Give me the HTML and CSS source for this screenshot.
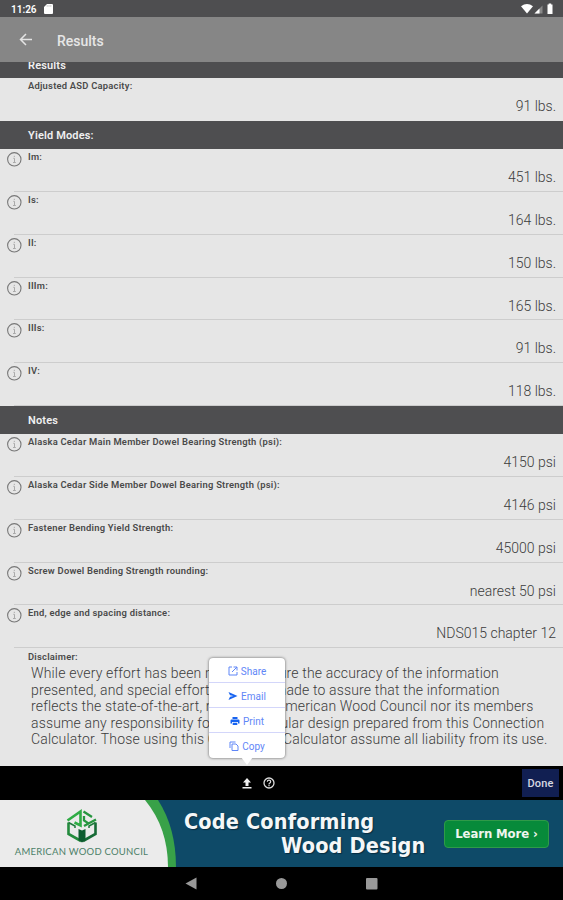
FILE: index.html
```html
<!DOCTYPE html>
<html lang="en">

<head>
    <meta charset="UTF-8">
    <meta name="viewport" content="width=device-width, initial-scale=1.0">
    <title>Results</title>
    <link rel="stylesheet" href="styles.css">
</head>

<body>

    <!-- shared icons -->
    <svg class="defs" width="0" height="0">
        <symbol id="info" viewBox="0 0 16 16">
            <circle cx="8.300" cy="8.300" r="6.700" fill="none" stroke="#777" stroke-width="1.100" />
            <path d="M7.300 7.300h1.200v4M7 11.500h2.800M8.300 4.800v1.200" fill="none" stroke="#aaa" stroke-width="1" />
        </symbol>
    </svg>

    <div class="status">
        <span class="clock">11:26</span>
        <svg class="sd" width="9" height="10" viewBox="0 0 9 10">
            <path d="M3 0h5q1 0 1 1v8q0 1-1 1H1q-1 0-1-1V3z" fill="#fff" />
            <path d="M3.2 1.2v1.5M5 1.2v1.5M6.8 1.2v1.5" stroke="#aaa" stroke-width=".7" />
        </svg>
        <svg class="signals" width="34" height="12" viewBox="0 0 34 12">
            <path d="M2 3.300Q8 -1.300 14 3.300L8 10.500z" fill="#fff" />
            <path d="M15.500 10.500L23.500 2.500V10.500z" fill="#888" />
            <path d="M15.500 10.500L20.500 5.500V10.500z" fill="#fff" />
            <path d="M28.500 1.500H29.700V.5h2.500v1H33.500v9.500h-5z" fill="#fff" />
        </svg>
    </div>

    <div class="header">
        <svg width="14" height="14" viewBox="0 0 14 14">
            <path d="M13 6.500H2M7 1L1.500 6.500L7 12" fill="none" stroke="#e4e4e4" stroke-width="1.500" />
        </svg>
        <h1>Results</h1>
    </div>

    <div class="content">
        <h2 class="cut"><span>Results</span></h2>
        <div class="row first">
            <label>Adjusted ASD Capacity:</label>
            <p>91 lbs.</p>
        </div>

        <h2>Yield Modes:</h2>
        <div class="row"><svg><use href="#info" /></svg><label>Im:</label><p>451 lbs.</p></div>
        <div class="row"><svg><use href="#info" /></svg><label>Is:</label><p>164 lbs.</p></div>
        <div class="row"><svg><use href="#info" /></svg><label>II:</label><p>150 lbs.</p></div>
        <div class="row"><svg><use href="#info" /></svg><label>IIIm:</label><p>165 lbs.</p></div>
        <div class="row"><svg><use href="#info" /></svg><label>IIIs:</label><p>91 lbs.</p></div>
        <div class="row"><svg><use href="#info" /></svg><label>IV:</label><p>118 lbs.</p></div>

        <h2>Notes</h2>
        <div class="row"><svg><use href="#info" /></svg><label>Alaska Cedar Main Member Dowel Bearing Strength (psi):</label><p>4150 psi</p></div>
        <div class="row"><svg><use href="#info" /></svg><label>Alaska Cedar Side Member Dowel Bearing Strength (psi):</label><p>4146 psi</p></div>
        <div class="row"><svg><use href="#info" /></svg><label>Fastener Bending Yield Strength:</label><p>45000 psi</p></div>
        <div class="row"><svg><use href="#info" /></svg><label>Screw Dowel Bending Strength rounding:</label><p>nearest 50 psi</p></div>
        <div class="row"><svg><use href="#info" /></svg><label>End, edge and spacing distance:</label><p>NDS015 chapter 12</p></div>

        <div class="disclaimer">
            <label>Disclaimer:</label>
            <p>
                While every effort has been made to insure the accuracy of the information<br>
                presented, and special effort has been made to assure that the information<br>
                reflects the state-of-the-art, neither the American Wood Council nor its members<br>
                assume any responsibility for any particular design prepared from this Connection<br>
                Calculator. Those using this Connection Calculator assume all liability from its use.
            </p>
        </div>
    </div>

    <div class="toolbar">
        <svg class="upload" width="10" height="11" viewBox="0 0 10 11">
            <path d="M5 0L9 4.500H6.500V8h-3V4.500H1zM.5 9h9v1.500h-9z" fill="#eee" />
        </svg>
        <svg class="help" width="12" height="12" viewBox="0 0 12 12">
            <circle cx="6" cy="6" r="5" fill="none" stroke="#ddd" stroke-width="1.300" />
            <path d="M4.300 4.800Q4.300 3.200 6 3.200T7.700 4.700Q7.700 5.600 6.700 6.100Q6 6.500 6 7.400M6 8.100v1.200" fill="none" stroke="#ddd" stroke-width="1.200" />
        </svg>
        <button class="done">Done</button>

        <div class="menu">
            <a>
                <svg width="10" height="10" viewBox="0 0 10 10"><path d="M4 1H1v8h8V6M5.500 1H9v3.500M9 1L4 6" fill="none" stroke="#5f86f7" stroke-width="1" /></svg>
                Share
            </a>
            <a>
                <svg width="10" height="10" viewBox="0 0 10 10"><path d="M.5 1L9.500 5L.5 9L2 5.700L5.500 5L2 4.300z" fill="#1763f0" /></svg>
                Email
            </a>
            <a>
                <svg width="10" height="10" viewBox="0 0 10 10"><path d="M2.500 1h5v2h-5zM1.500 3.500h7q1 0 1 1V7.500H8V6H2v1.500H.5v-3q0-1 1-1zM2.700 6.700h4.600V9H2.700z" fill="#1763f0" /></svg>
                Print
            </a>
            <a>
                <svg width="10" height="10" viewBox="0 0 10 10"><path d="M1 7V1h5.500M3 3h4l2 2v4.500H3z" fill="none" stroke="#5f86f7" stroke-width="1" /></svg>
                Copy
            </a>
        </div>
    </div>

    <div class="banner">
        <svg class="curve" width="180" height="67" viewBox="0 0 180 67">
            <path d="M0 0H158Q176 28 176 67H0z" fill="#38a148" />
            <path d="M0 0H145Q168 28 168 67H0z" fill="#ebebeb" />
        </svg>
        <div class="logo">
            <!-- hexagonal mark: open box below, arrow roof above -->
            <svg width="32" height="34" viewBox="0 0 32 34">
                <g fill="none" stroke-width="2.600">
                    <path d="M2.500 13.500V25L15 32" stroke="#238b3d" />
                    <path d="M29.500 13.500V25L17 32" stroke="#176b36" />
                    <path d="M2.500 13.500L9 17V19M29.500 13.500L23 17V19" stroke="#1d7a3b" stroke-width="1.500" />
                    <path d="M1.500 11.500L14.500 2.500V16.500L8.500 13.500" stroke="#2fac45" />
                    <path d="M17.500 2.500L26 8M18 7V11.500L22.500 14.500L30 10.500M18 17L22.500 14.500" stroke="#26963f" stroke-width="2.300" />
                </g>
                <path d="M12.500 20L16 21.500L19.500 20V31L16 33.500L12.500 31z" fill="#0e5c30" />
            </svg>
            <span>AMERICAN WOOD COUNCIL</span>
        </div>
        <div class="slogan">
            <div>Code Conforming</div>
            <div class="second">Wood Design</div>
        </div>
        <a class="learn">Learn More ›</a>
    </div>

    <div class="nav">
        <svg width="563" height="33" viewBox="0 0 563 33">
            <path d="M185.500 16.500L196.500 10.500V22.500z" fill="#999" />
            <circle cx="281.500" cy="16.500" r="5.500" fill="#999" />
            <rect x="366" y="11" width="11.500" height="11.500" rx="1" fill="#999" />
        </svg>
    </div>

</body>

</html>
```
FILE: styles.css
```css
body {
    margin: 0;
    width: 563px;
    height: 900px;
    overflow: hidden;
    display: flex;
    flex-direction: column;
    font-family: Roboto, "Liberation Sans", sans-serif;
    background-color: #000;
    color: #3c3c3c;
}

.defs {
    display: none;
}

h1, h2, p {
    margin: 0;
}

.status {
    height: 17px;
    box-sizing: border-box;
    padding: 1px 10px 0 11px;
    display: flex;
    align-items: center;
    background-color: #4e4e50;
}

.clock {
    width: 33px;
    font-size: 10px;
    font-weight: 600;
    color: #fff;
}

.signals {
    margin-left: auto;
}

.header {
    height: 45px;
    display: flex;
    align-items: center;
    padding-left: 19px;
    background-color: #868686;
}

.header h1 {
    margin: 2px 0 0 24px;
    font-size: 14px;
    font-weight: 500;
    color: #e6e6e6;
}

.content {
    height: 704px;
    overflow: hidden;
    background-color: #e6e6e6;
}

h2 {
    height: 28px;
    line-height: 29px;
    box-sizing: border-box;
    padding-left: 28px;
    font-size: 11px;
    font-weight: 600;
    letter-spacing: .15px;
    color: #f0f0f0;
    background-color: #4e4e50;
}

/* scrolled half way under the header */
.cut {
    height: 16px;
    overflow: hidden;
}

.cut span {
    display: block;
    margin-top: -11px;
}

.row {
    display: grid;
    grid-template-columns: 28px 1fr;
    height: 42.85px;
    box-sizing: border-box;
    padding-right: 7px;
    background: linear-gradient(#cdcdcd, #cdcdcd) 14px 100% / 100% 1px no-repeat;
}

.row.first {
    height: 43px;
    background: none;
}

.row svg {
    width: 16px;
    height: 16px;
    margin: 2px 0 0 6px;
}

.row label {
    grid-column: 2;
    grid-row: 1;
    line-height: 15px;
}

label {
    font-size: 9.4px;
    font-weight: 600;
    letter-spacing: .23px;
    color: #4a4a4a;
}

.row p {
    grid-column: 2;
    grid-row: 1;
    margin-top: 19px;
    line-height: 19px;
    text-align: right;
    font-size: 14px;
    font-weight: 300;
}

.disclaimer {
    padding-left: 28px;
}

.disclaimer label {
    display: block;
    line-height: 17px;
}

.disclaimer p {
    padding-left: 3px;
    white-space: nowrap;
    font-size: 14px;
    font-weight: 300;
    letter-spacing: .16px;
    line-height: 16.5px;
}

.toolbar {
    position: relative;
    height: 34px;
    display: flex;
    align-items: center;
    background-color: #000;
}

.upload {
    margin-left: 242px;
}

.help {
    margin-left: 11px;
}

.done {
    width: 37px;
    height: 28px;
    margin: 0 4px 0 auto;
    padding: 0;
    border: 0;
    font: 500 11px Roboto, sans-serif;
    letter-spacing: .2px;
    color: #d8d8e2;
    background-color: #111f52;
}

/* popup over the disclaimer, arrow points at the upload icon */
.menu {
    position: absolute;
    left: 209px;
    bottom: 42px;
    width: 76px;
    height: 100px;
    border-radius: 4px;
    background-color: #fff;
    box-shadow: 0 0 3px rgba(0, 0, 0, .6);
}

.menu::after {
    content: "";
    position: absolute;
    left: 32px;
    top: 99px;
    border: 6px solid transparent;
    border-top: 8px solid #fff;
    border-bottom: 0;
}

.menu a {
    height: 25px;
    box-sizing: border-box;
    padding-top: 2px;
    display: flex;
    align-items: center;
    justify-content: center;
    gap: 3px;
    border-bottom: 1px solid #d3d6fa;
    font-size: 10px;
    color: #5f86f7;
}

.menu a:last-child {
    padding-top: 1px;
    border-bottom: 0;
}

.banner {
    height: 67px;
    display: grid;
    grid-template-columns: 184px 260px 105px;
    background-color: #0e4a68;
}

.curve {
    grid-area: 1 / 1;
}

.logo {
    grid-area: 1 / 1;
    display: flex;
    flex-direction: column;
    align-items: center;
    width: 163px;
    padding-top: 9px;
    z-index: 1;
}

.logo span {
    font: 9.5px Lato, sans-serif;
    line-height: 17px;
    letter-spacing: .25px;
    white-space: nowrap;
    color: #4c7f68;
}

.slogan {
    padding-top: 10px;
    font: bold 21.5px "DejaVu Sans Condensed", "DejaVu Sans", sans-serif;
    font-stretch: condensed;
    letter-spacing: .15px;
    line-height: 24px;
    white-space: nowrap;
    color: #f4f7f8;
    text-shadow: 1px 1px 1px #082c40;
}

.second {
    padding-left: 97px;
}

.learn {
    align-self: center;
    height: 26px;
    line-height: 26px;
    border: 1px solid #2f9a48;
    border-radius: 4px;
    text-align: center;
    font-family: "DejaVu Sans Condensed", "DejaVu Sans", sans-serif;
    font-stretch: condensed;
    font-size: 13px;
    font-weight: bold;
    letter-spacing: -.1px;
    color: #f0f5ee;
    background-color: #078a3a;
}

.nav {
    height: 33px;
}
```
